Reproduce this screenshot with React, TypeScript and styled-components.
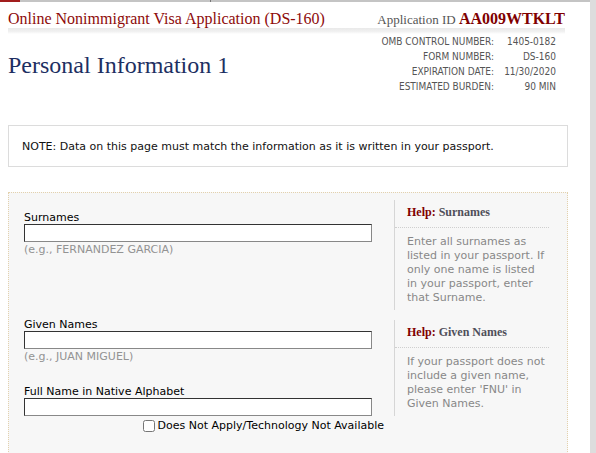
import React from 'react'
import styled, { createGlobalStyle } from 'styled-components'

const GlobalStyle = createGlobalStyle`
  html, body {
    margin: 0;
    padding: 0;
    background: #fff;
  }
  body {
    font-family: 'DejaVu Sans', Verdana, sans-serif;
    font-size: 11px;
    color: #000;
  }
`

const meta = [
  { label: 'OMB CONTROL NUMBER:', value: '1405-0182' },
  { label: 'FORM NUMBER:', value: 'DS-160' },
  { label: 'EXPIRATION DATE:', value: '11/30/2020' },
  { label: 'ESTIMATED BURDEN:', value: '90 MIN' },
]

export default function App() {
  return (
    <Page>
      <GlobalStyle />
      <Main>
        <TopStrip>
          <StripRed />
          <StripGray />
          <StripRest />
        </TopStrip>
        <Content>
          <Masthead>
            <SiteTitle>Online Nonimmigrant Visa Application (DS-160)</SiteTitle>
            <AppId>
              Application ID <AppIdValue>AA009WTKLT</AppIdValue>
            </AppId>
          </Masthead>
          <Band />
          <SubHeader>
            <PageTitle>Personal Information 1</PageTitle>
            <MetaTable>
              {meta.map((m) => (
                <MetaRow key={m.label}>
                  <MetaLabel>{m.label}</MetaLabel>
                  <MetaValue>{m.value}</MetaValue>
                </MetaRow>
              ))}
            </MetaTable>
          </SubHeader>

          <NoteBox>
            NOTE: Data on this page must match the information as it is written in your passport.
          </NoteBox>

          <FormSection>
            <Fields>
              <Field>
                <Label>Surnames</Label>
                <TextInput type="text" />
                <Hint>(e.g., FERNANDEZ GARCIA)</Hint>
              </Field>
              <Field $top={61}>
                <Label>Given Names</Label>
                <TextInput type="text" />
                <Hint>(e.g., JUAN MIGUEL)</Hint>
              </Field>
              <Field $top={21}>
                <Label>Full Name in Native Alphabet</Label>
                <TextInput type="text" />
                <CheckRow>
                  <CheckBox type="checkbox" />
                  Does Not Apply/Technology Not Available
                </CheckRow>
              </Field>
            </Fields>
            <HelpColumn>
              <HelpBox>
                <HelpTitle>
                  <HelpWord>Help:</HelpWord> Surnames
                </HelpTitle>
                <HelpText>
                  Enter all surnames as listed in your passport. If only one name is listed in your
                  passport, enter
                  <br />
                  that Surname.
                </HelpText>
              </HelpBox>
              <HelpBox>
                <HelpTitle>
                  <HelpWord>Help:</HelpWord> Given Names
                </HelpTitle>
                <HelpText>
                  If your passport does not include a given name, please enter 'FNU' in Given Names.
                </HelpText>
              </HelpBox>
            </HelpColumn>
          </FormSection>
        </Content>
      </Main>
      <ScrollStrip />
    </Page>
  )
}

const Page = styled.div`
  display: flex;
  min-height: 100vh;
`

const Main = styled.div`
  flex: 1;
  display: flex;
  flex-direction: column;
`

const ScrollStrip = styled.div`
  width: 6px;
  background: #dddddd;
`

const TopStrip = styled.div`
  display: flex;
  height: 2px;
`

const StripRed = styled.div`
  width: 20px;
  background: #a11d1d;
`

const StripGray = styled.div`
  width: 190px;
  background: #c4c4c4;
  border-right: 1px solid #777;
`

const StripRest = styled.div`
  flex: 1;
  background: #c4c4c4;
`

const Content = styled.div`
  padding: 0 22px 0 8px;
`

const Masthead = styled.div`
  width: 557px;
  display: flex;
  justify-content: space-between;
  align-items: baseline;
  padding-top: 7px;
`

const SiteTitle = styled.div`
  font-family: 'Liberation Serif', serif;
  font-size: 16px;
  line-height: 19px;
  color: #8e0a0a;
`

const AppId = styled.div`
  font-family: 'Liberation Serif', serif;
  font-size: 13px;
  color: #555;
`

const AppIdValue = styled.span`
  font-size: 16px;
  font-weight: bold;
  color: #800000;
`

const Band = styled.div`
  width: 557px;
  height: 6px;
  background: linear-gradient(to bottom, #e9e9e9, #f1f1f1 60%, #fff);
`

const SubHeader = styled.div`
  width: 548px;
  display: flex;
  justify-content: space-between;
  align-items: flex-start;
`

const PageTitle = styled.h1`
  margin: 17px 0 0;
  font-family: 'Liberation Serif', serif;
  font-weight: normal;
  font-size: 24px;
  line-height: 28px;
  color: #1d2f62;
`

const MetaTable = styled.div`
  display: grid;
  grid-template-columns: auto 58px;
  column-gap: 4px;
`

const MetaRow = styled.div`
  display: contents;
`

const MetaLabel = styled.div`
  text-align: right;
  font-family: 'DejaVu Sans Condensed', 'DejaVu Sans', sans-serif;
  font-size: 10px;
  line-height: 15px;
  color: #555;
`

const MetaValue = styled(MetaLabel)``

const NoteBox = styled.div`
  box-sizing: border-box;
  margin-top: 31px;
  width: 560px;
  border: 1px solid #dcdcdc;
  padding: 14px 13px 13px;
  line-height: 13px;
  color: #111;
`

const FormSection = styled.div`
  box-sizing: border-box;
  margin-top: 25px;
  width: 560px;
  border: 1px dotted #e3d1ad;
  background: #f7f7f7;
  display: flex;
  padding: 7px 0 30px 15px;
  gap: 10px;
  min-height: 260px;
`

const Fields = styled.div`
  width: 360px;
  padding-top: 11px;
`

const Field = styled.div<{ $top?: number }>`
  margin-top: ${(p) => p.$top ?? 0}px;
  display: flex;
  flex-direction: column;
`

const Label = styled.label`
  line-height: 13px;
  color: #000;
`

const TextInput = styled.input`
  box-sizing: border-box;
  width: 348px;
  height: 18px;
  margin: 0;
  padding: 1px 3px;
  background: #fff;
  border: 1px solid;
  border-color: #333 #888 #888 #333;
  font: inherit;
`

const Hint = styled.div`
  line-height: 14px;
  padding-top: 1px;
  color: #939393;
`

const CheckRow = styled.label`
  display: flex;
  justify-content: flex-end;
  align-items: center;
  gap: 3px;
  margin-top: 3px;
  line-height: 14px;
  color: #000;
`

const CheckBox = styled.input`
  width: 12px;
  height: 12px;
  margin: 0;
`

const HelpColumn = styled.div`
  display: flex;
  flex-direction: column;
  gap: 10px;
`

const HelpBox = styled.div`
  width: 154px;
  border-left: 1px solid #d6d6d6;
  padding-bottom: 5px;
`

const HelpTitle = styled.div`
  margin-top: 5px;
  padding: 0 0 7px 12px;
  border-bottom: 1px dotted #cfcfcf;
  font-family: 'Liberation Serif', serif;
  font-size: 12px;
  font-weight: bold;
  line-height: 15px;
  color: #4f4f5a;
`

const HelpWord = styled.span`
  color: #800000;
`

const HelpText = styled.p`
  margin: 7px 0 0;
  padding: 0 2px 0 12px;
  font-size: 11px;
  line-height: 14px;
  color: #888;
`
